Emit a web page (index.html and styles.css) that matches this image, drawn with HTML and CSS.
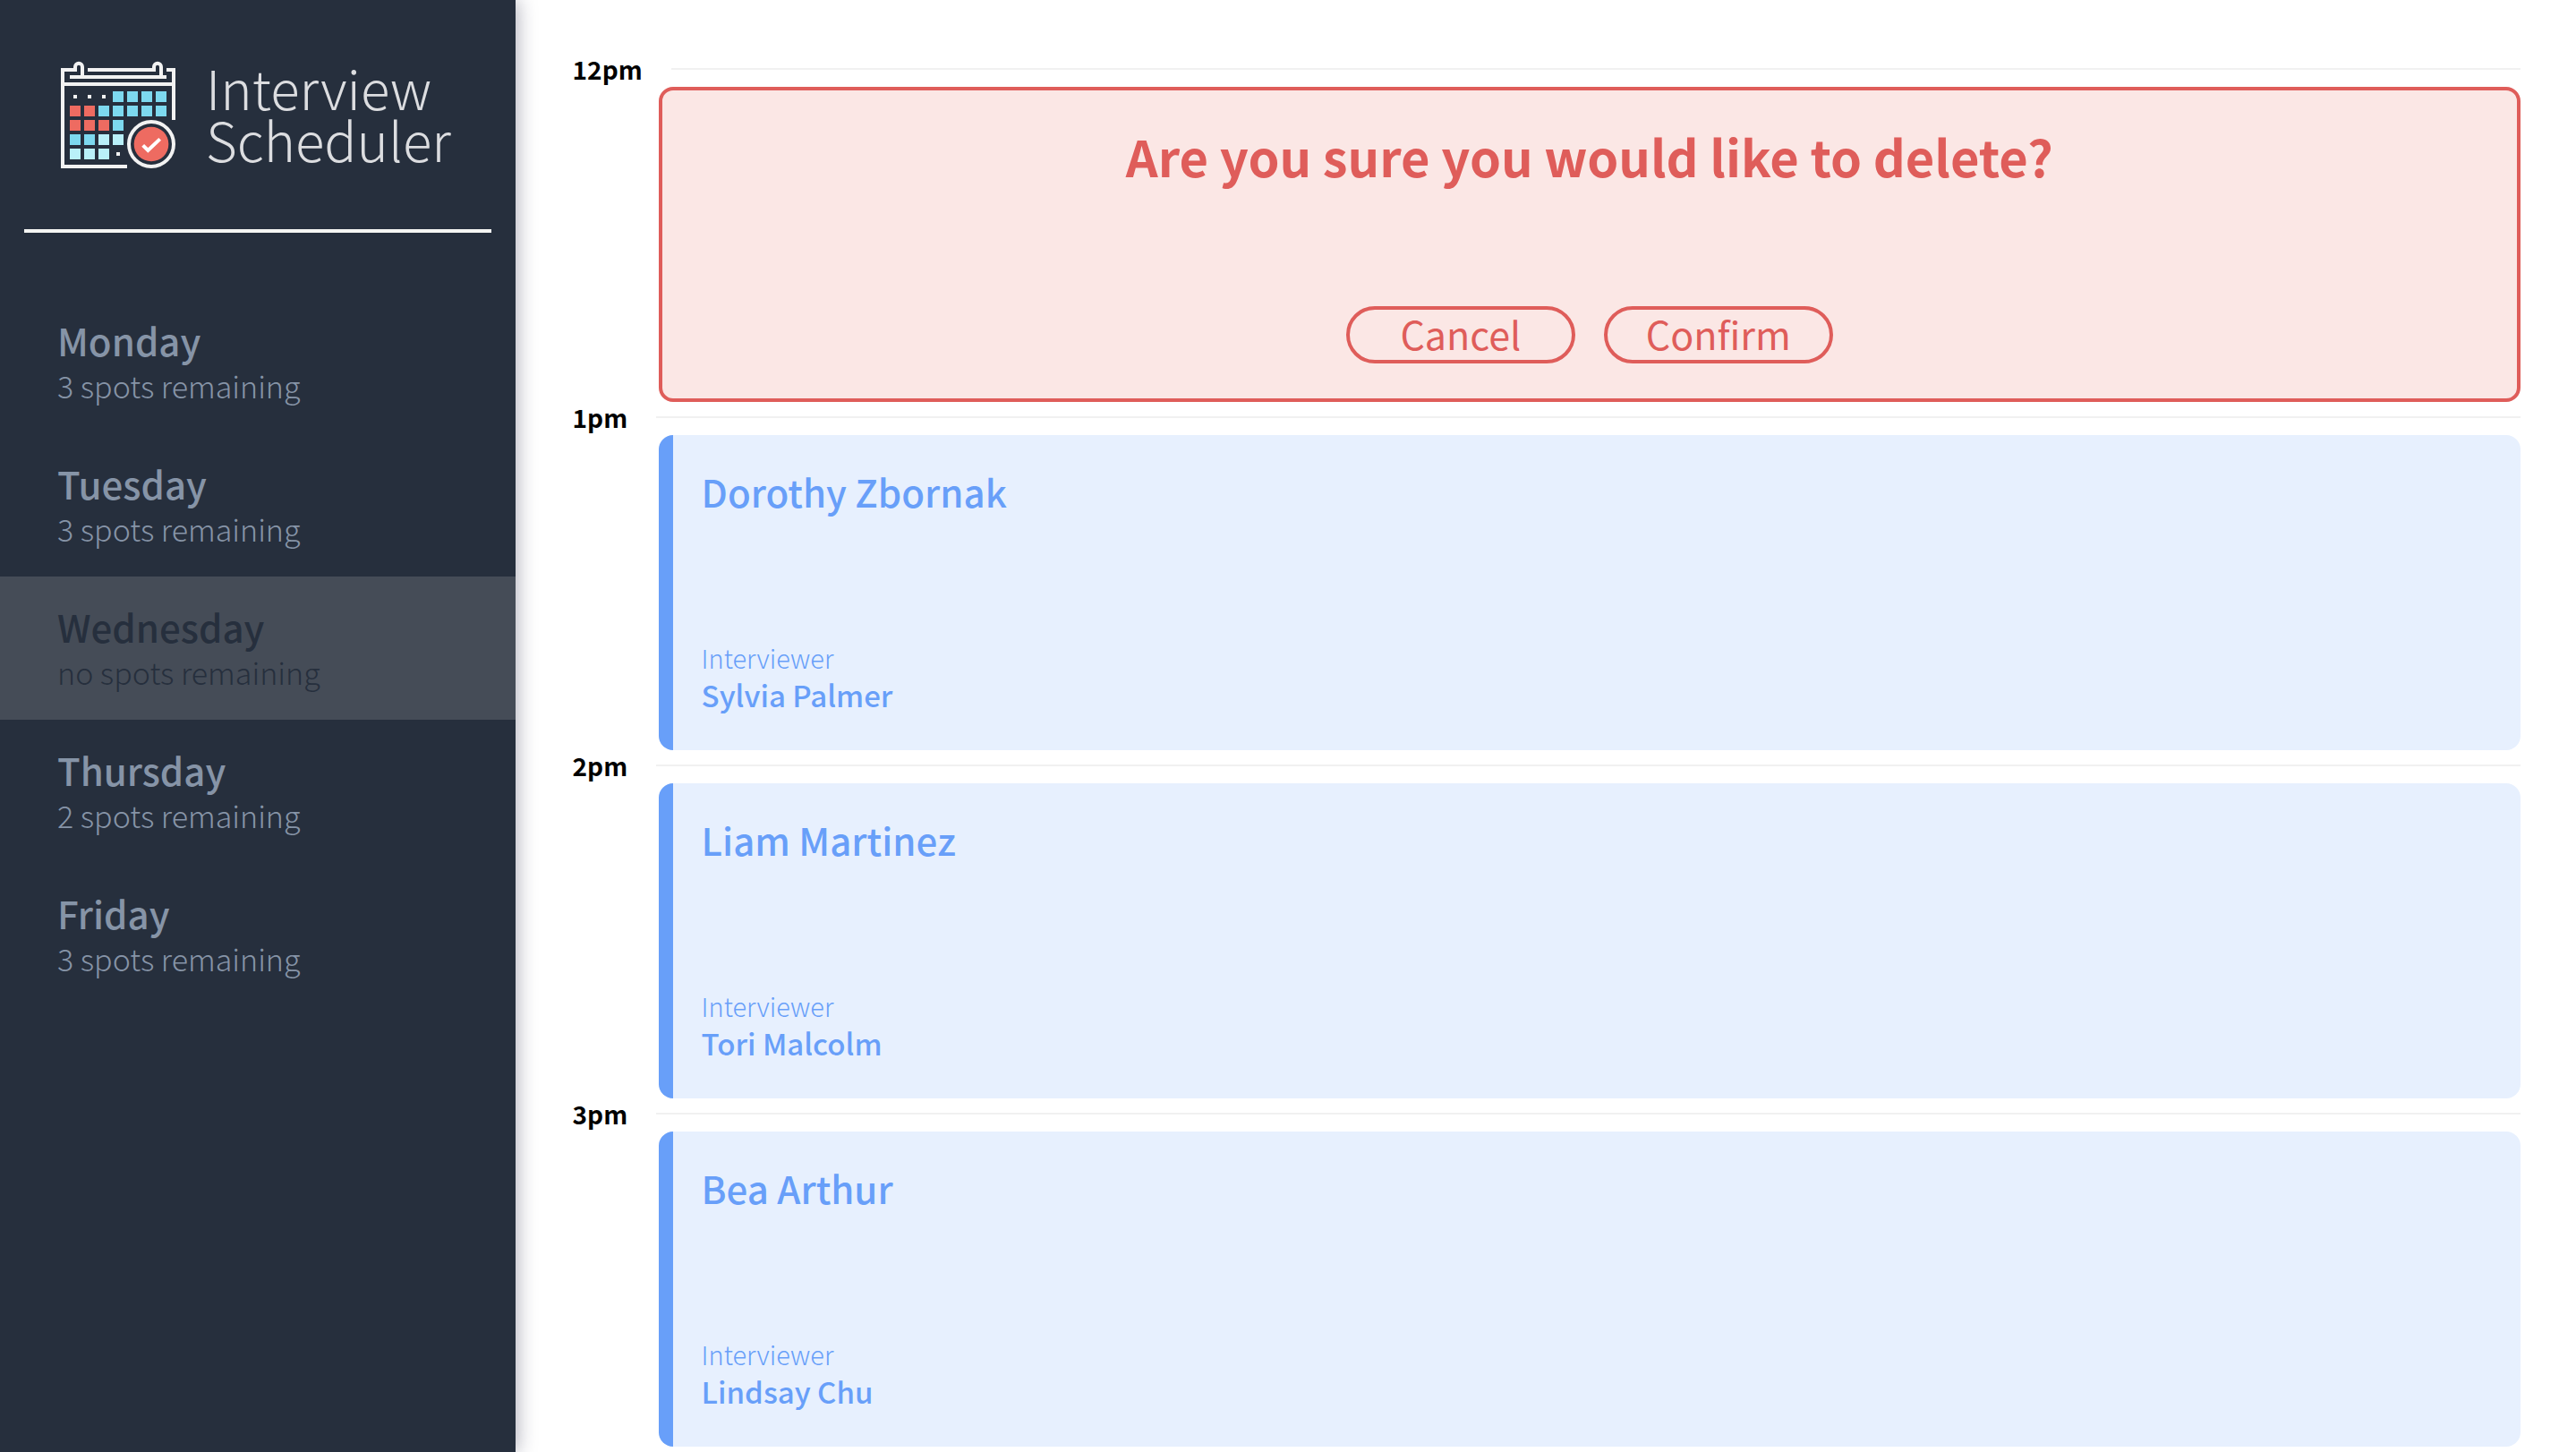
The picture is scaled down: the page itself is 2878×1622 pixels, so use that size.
FILE: index.html
```html
<!DOCTYPE html>
<html lang="en">
<head>
<meta charset="utf-8">
<meta name="viewport" content="width=device-width, initial-scale=1">
<title>Interview Scheduler</title>
<link rel="stylesheet" href="styles.css">
</head>
<body>
<div class="layout">
  <aside class="sidebar">
    <header class="brand">
      <svg class="brand-icon" viewBox="39 24 384 360" aria-hidden="true">
        <g fill="none" stroke="#f2f2f2" stroke-width="12">
          <path d="M87 60V54H45V378H261"/>
          <path d="M87 54V44a12 12 0 0 1 24 0V78"/>
          <path d="M129 54H351V44a12 12 0 0 1 24 0V78"/>
          <path d="M393 54H417V222"/>
          <path d="M69 78H393M45 102H417"/>
          <circle cx="342" cy="303" r="75"/>
        </g>
        <g fill="#f2f2f2">
          <path d="M81 138h12v12h-12zM129 138h12v12h-12zM177 138h12v12h-12zM225 330h12v12h-12z"/>
        </g>
        <path fill="#7dd9ef" d="M213 126h36v36h-36zM261 126h36v36h-36zM309 126h36v36h-36zM357 126h36v36h-36zM165 174h36v36h-36zM213 174h36v36h-36zM261 174h36v36h-36zM309 174h36v36h-36zM357 174h36v36h-36zM213 222h36v36h-36zM69 270h36v36h-36zM117 270h36v36h-36z"/>
        <path fill="#ee6b61" d="M69 174h36v36h-36zM117 174h36v36h-36zM69 222h36v36h-36zM117 222h36v36h-36zM165 222h36v36h-36z"/>
        <path fill="#b9f0f9" d="M165 270h36v36h-36zM213 270h36v36h-36zM69 318h36v36h-36zM117 318h36v36h-36zM165 318h36v36h-36z"/>
        <circle cx="342" cy="303" r="58" fill="#ee6b61"/>
        <path d="M314 307L331 324L371 286" fill="none" stroke="#fff" stroke-width="12"/>
      </svg>
      <h1 class="brand-name">Interview<br>Scheduler</h1>
    </header>
    <hr class="divider">
    <nav aria-label="Days">
      <ul class="days">
        <li><a class="day" href="#monday"><span class="day-name">Monday</span><span class="day-spots">3 spots remaining</span></a></li>
        <li><a class="day" href="#tuesday"><span class="day-name">Tuesday</span><span class="day-spots">3 spots remaining</span></a></li>
        <li><a class="day day-selected" href="#wednesday" aria-current="page"><span class="day-name">Wednesday</span><span class="day-spots">no spots remaining</span></a></li>
        <li><a class="day" href="#thursday"><span class="day-name">Thursday</span><span class="day-spots">2 spots remaining</span></a></li>
        <li><a class="day" href="#friday"><span class="day-name">Friday</span><span class="day-spots">3 spots remaining</span></a></li>
      </ul>
    </nav>
  </aside>
  <main class="schedule">
    <section class="slot">
      <header class="slot-time"><h2 class="slot-label">12pm</h2><hr class="slot-line"></header>
      <div class="card confirm">
        <p class="confirm-title">Are you sure you would like to delete?</p>
        <div class="actions">
          <button class="button" type="button">Cancel</button>
          <button class="button" type="button">Confirm</button>
        </div>
      </div>
    </section>
    <section class="slot">
      <header class="slot-time"><h2 class="slot-label">1pm</h2><hr class="slot-line"></header>
      <article class="card booking">
        <h3 class="student">Dorothy Zbornak</h3>
        <div><p class="role">Interviewer</p><p class="interviewer">Sylvia Palmer</p></div>
      </article>
    </section>
    <section class="slot">
      <header class="slot-time"><h2 class="slot-label">2pm</h2><hr class="slot-line"></header>
      <article class="card booking">
        <h3 class="student">Liam Martinez</h3>
        <div><p class="role">Interviewer</p><p class="interviewer">Tori Malcolm</p></div>
      </article>
    </section>
    <section class="slot">
      <header class="slot-time"><h2 class="slot-label">3pm</h2><hr class="slot-line"></header>
      <article class="card booking">
        <h3 class="student">Bea Arthur</h3>
        <div><p class="role">Interviewer</p><p class="interviewer">Lindsay Chu</p></div>
      </article>
    </section>
  </main>
</div>
</body>
</html>
```
FILE: styles.css
```css
* {
  box-sizing: border-box;
}

body,
h1,
h2,
h3,
p,
ul {
  margin: 0;
  padding: 0;
}

body {
  font-family: "Noto Sans CJK SC", "Noto Sans", sans-serif;
  background: #fff;
  color: #000;
}

.layout {
  display: flex;
  min-height: 100vh;
}

.sidebar {
  width: 20%;
  flex: none;
  background: #262f3d;
  box-shadow: 2px 0 20px rgba(30, 30, 60, 0.35);
}

.brand {
  display: flex;
  gap: 34px;
  padding: 68px 0 68px 68px;
}

.brand-icon {
  width: 128px;
  height: 120px;
  flex: none;
}

.brand-name {
  font-size: 60px;
  line-height: 58px;
  font-weight: 300;
  color: #dcdde0;
}

.divider {
  height: 4px;
  margin: 0 27px 64px;
  border: 0;
  background: #f4f5f3;
}

.days {
  list-style: none;
}

.day {
  display: flex;
  flex-direction: column;
  padding: 32px 32px 26px 64px;
  color: #8694a7;
  text-decoration: none;
}

.day-selected {
  background: #454c57;
  color: #262f3d;
}

.day-name {
  font-size: 42px;
  line-height: 48px;
  font-weight: 500;
}

.day-spots {
  font-size: 34px;
  line-height: 54px;
  font-weight: 300;
}

.schedule {
  flex: 1;
  padding: 60px 62px 0 64px;
}

.slot-time {
  display: flex;
  align-items: center;
  gap: 32px;
  padding-bottom: 3px;
}

.slot-label {
  font-size: 28px;
  line-height: 34px;
  font-weight: 700;
}

.slot-line {
  flex: 1;
  height: 2px;
  margin: 0;
  border: 0;
  background: #f1f1f1;
}

.card {
  display: flex;
  flex-direction: column;
  justify-content: space-between;
  min-height: 352px;
  margin-left: 96px;
  border-radius: 16px;
}

.confirm {
  align-items: center;
  padding: 34px 32px 39px;
  border: 4px solid #df5d5a;
  background: #fbe7e5;
  color: #df5d5a;
}

.confirm-title {
  font-size: 56px;
  line-height: 78px;
  font-weight: 700;
}

.actions {
  display: flex;
  gap: 32px;
}

.button {
  width: 256px;
  height: 64px;
  padding: 0 0 4px;
  border: 4px solid #df5d5a;
  border-radius: 32px;
  background: transparent;
  color: #df5d5a;
  font-family: inherit;
  font-size: 43px;
  line-height: 52px;
}

.booking {
  padding: 38px 32px;
  border-left: 16px solid #689ff9;
  background: #e7f0fe;
  color: #689ff9;
}

.student {
  font-size: 42px;
  line-height: 50px;
  font-weight: 500;
}

.role {
  font-size: 29px;
  line-height: 36px;
  font-weight: 300;
}

.interviewer {
  font-size: 33px;
  line-height: 48px;
  font-weight: 500;
}
```
